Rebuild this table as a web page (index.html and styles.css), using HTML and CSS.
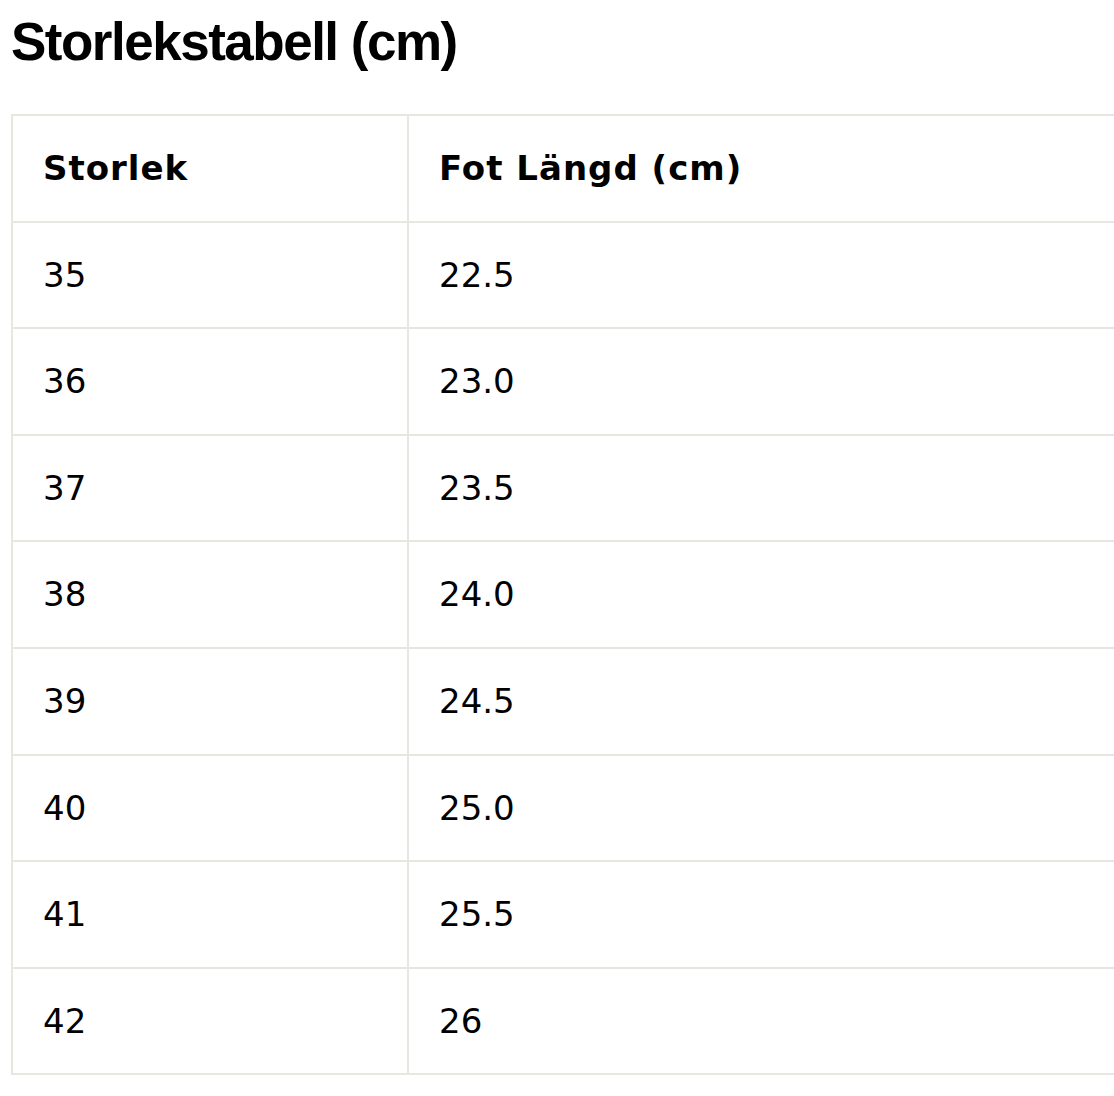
FILE: index.html
```html
<!DOCTYPE html>
<html lang="sv">
<head>
<meta charset="utf-8">
<title>Storlekstabell</title>
<link rel="stylesheet" href="styles.css">
</head>
<body>
<main class="page">
  <h1 class="title">Storlekstabell (cm)</h1>
  <table class="size-table">
    <thead>
      <tr><th class="col-size">Storlek</th><th>Fot Längd (cm)</th></tr>
    </thead>
    <tbody>
      <tr><td>35</td><td>22.5</td></tr>
      <tr><td>36</td><td>23.0</td></tr>
      <tr><td>37</td><td>23.5</td></tr>
      <tr><td>38</td><td>24.0</td></tr>
      <tr><td>39</td><td>24.5</td></tr>
      <tr><td>40</td><td>25.0</td></tr>
      <tr><td>41</td><td>25.5</td></tr>
      <tr><td>42</td><td>26</td></tr>
    </tbody>
  </table>
</main>
</body>
</html>
```

FILE: styles.css
```css
html, body {
  margin: 0;
  padding: 0;
  background: #fff;
  overflow: hidden;
}
.page {
  padding: 12px 0 0 11px;
  width: 1120px;
}
.title {
  margin: 0;
  font-family: "Liberation Sans", Arial, sans-serif;
  font-weight: 700;
  font-size: 53px;
  line-height: 60px;
  letter-spacing: -1.5px;
  color: #000;
}
.size-table {
  margin-top: 42px;
  width: 1120px;
  border-collapse: collapse;
  font-family: "DejaVu Sans", sans-serif;
  font-size: 34px;
  color: #000;
}
.size-table th,
.size-table td {
  border: 2px solid #e7e7e1;
  text-align: left;
  padding: 32px 30px;
  line-height: 40.6px;
}
.size-table th {
  font-weight: 700;
  letter-spacing: 1px;
}
.col-size {
  width: 334px;
}
```
